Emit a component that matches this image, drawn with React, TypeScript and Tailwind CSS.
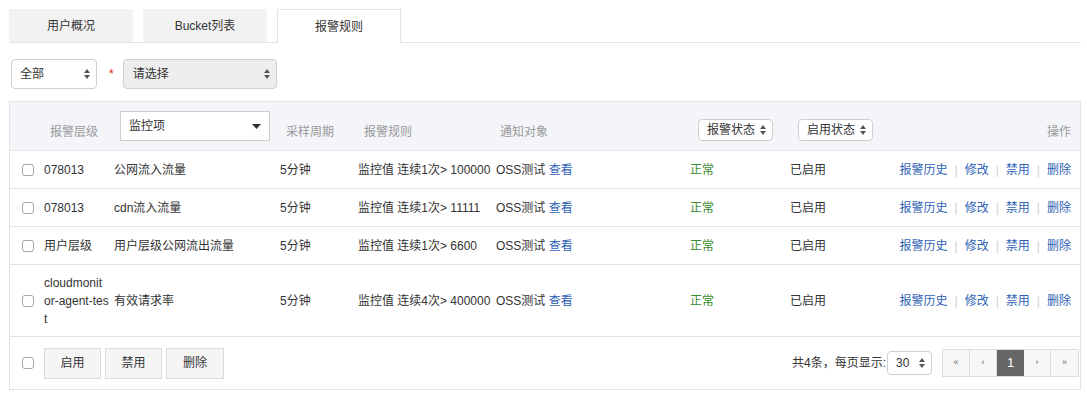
import React from "react";

const font = { fontFamily: '"Liberation Sans", "Noto Sans CJK SC", sans-serif' };

function UpDown({ className = "" }: { className?: string }) {
  return (
    <svg width="6" height="10" viewBox="0 0 6 10" className={className}>
      <path d="M3 0 L6 4 L0 4 Z" fill="#555" />
      <path d="M3 10 L6 6 L0 6 Z" fill="#555" />
    </svg>
  );
}

function Checkbox() {
  return <span className="block w-[12px] h-[12px] rounded-[3px] border border-[#a8a8a8] bg-white" />;
}

const cols = "grid grid-cols-[30px_70px_166px_78px_138px_194px_100px_94px_1fr]";

const rows = [
  { level: ["078013"], item: "公网流入流量", rule: "监控值 连续1次> 100000", tall: false },
  { level: ["078013"], item: "cdn流入流量", rule: "监控值 连续1次> 11111", tall: false },
  { level: ["用户层级"], item: "用户层级公网流出流量", rule: "监控值 连续1次> 6600", tall: false },
  { level: ["cloudmonit", "or-agent-tes", "t"], item: "有效请求率", rule: "监控值 连续4次> 400000", tall: true },
];

export default function App() {
  return (
    <div className="w-[1087px] h-[395px] bg-white text-[12px] text-[#333] overflow-hidden" style={font}>
      {/* Tabs */}
      <div className="pt-[9px] pl-[9px] pr-[6px]">
        <div className="flex border-b border-[#e3e3e3] h-[34px]">
          <div className="w-[124px] h-[33px] bg-[#f2f2f2] flex items-center justify-center">用户概况</div>
          <div className="w-[124px] h-[33px] bg-[#f2f2f2] ml-[10px] flex items-center justify-center">Bucket列表</div>
          <div className="w-[124px] h-[34px] bg-white ml-[10px] border border-b-0 border-[#e3e3e3] flex items-center justify-center -mb-px">报警规则</div>
        </div>
      </div>

      {/* Filters */}
      <div className="flex items-center pl-[11px] mt-[16px] h-[30px]">
        <div className="w-[86px] h-[30px] rounded-[4px] border border-[#cfcfcf] bg-white flex items-center justify-between pl-[8px] pr-[6px]">
          <span>全部</span>
          <UpDown />
        </div>
        <span className="text-[#e02020] ml-[12px] mr-[9px] text-[12px]">*</span>
        <div className="w-[154px] h-[30px] rounded-[4px] border border-[#cfcfcf] bg-[#eeeeee] flex items-center justify-between pl-[9px] pr-[6px]">
          <span>请选择</span>
          <UpDown />
        </div>
      </div>

      {/* Table */}
      <div className="ml-[9px] mt-[12px] w-[1072px] border border-[#e3e3e3]">
        {/* header */}
        <div className={`${cols} h-[49px] bg-[#f4f5f9] border-b border-[#e3e3e3] items-end pb-[9px] text-[#999]`}>
          <div />
          <div className="pl-[10px] leading-[18px]">报警层级</div>
          <div className="pl-[10px]">
            <div className="w-[150px] h-[30px] bg-white border border-[#cfcfcf] flex items-start justify-between pl-[8px] pr-[8px] pt-[5px] text-[#333]">
              <span>监控项</span>
              <svg width="9" height="5" viewBox="0 0 9 5" className="mt-[7px]"><path d="M0 0 L9 0 L4.5 5 Z" fill="#333" /></svg>
            </div>
          </div>
          <div className="pl-[10px] leading-[18px]">采样周期</div>
          <div className="pl-[10px] leading-[18px]">报警规则</div>
          <div className="pl-[8px] leading-[18px]">通知对象</div>
          <div className="pl-[12px]">
            <div className="w-[75px] h-[22px] bg-white border border-[#cfcfcf] rounded-[4px] flex items-center justify-between pl-[8px] pr-[6px] text-[#333]">
              <span>报警状态</span>
              <UpDown />
            </div>
          </div>
          <div className="pl-[12px]">
            <div className="w-[75px] h-[22px] bg-white border border-[#cfcfcf] rounded-[4px] flex items-center justify-between pl-[8px] pr-[6px] text-[#333]">
              <span>启用状态</span>
              <UpDown />
            </div>
          </div>
          <div className="text-right pr-[9px] leading-[18px]">操作</div>
        </div>

        {/* body */}
        {rows.map((r, i) => (
          <div
            key={i}
            className={`${cols} ${r.tall ? "h-[72px]" : "h-[38px]"} border-b border-[#e3e3e3] items-center leading-[18px]`}
          >
            <div className="pl-[12px]"><Checkbox /></div>
            <div className="pl-[4px]">
              {r.level.map((l, j) => (
                <div key={j}>{l}</div>
              ))}
            </div>
            <div className="pl-[4px]">{r.item}</div>
            <div className="pl-[4px]">5分钟</div>
            <div className="pl-[4px] whitespace-nowrap">{r.rule}</div>
            <div className="pl-[4px]">
              OSS测试 <span className="text-[#2f62b6]">查看</span>
            </div>
            <div className="pl-[4px] text-[#3b8a2f]">正常</div>
            <div className="pl-[4px]">已启用</div>
            <div className="flex justify-end pr-[9px] text-[#2f62b6]">
              <span>报警历史</span>
              <span className="text-[#d0d0d0] mx-[7px]">|</span>
              <span>修改</span>
              <span className="text-[#d0d0d0] mx-[7px]">|</span>
              <span>禁用</span>
              <span className="text-[#d0d0d0] mx-[7px]">|</span>
              <span>删除</span>
            </div>
          </div>
        ))}

        {/* footer */}
        <div className="h-[52px] flex items-center">
          <div className="pl-[12px] w-[34px]"><Checkbox /></div>
          <div className="flex gap-[4px]">
            <button className="w-[57px] h-[31px] bg-[#f5f5f5] border border-[#dcdcdc]">启用</button>
            <button className="w-[57px] h-[31px] bg-[#f5f5f5] border border-[#dcdcdc]">禁用</button>
            <button className="w-[58px] h-[31px] bg-[#f5f5f5] border border-[#dcdcdc]">删除</button>
          </div>
          <div className="flex-1" />
          <span>共4条，每页显示:</span>
          <div className="ml-[1px] w-[45px] h-[24px] rounded-[4px] border border-[#cfcfcf] bg-white flex items-center justify-between pl-[8px] pr-[6px]">
            <span>30</span>
            <UpDown />
          </div>
          <div className="ml-[10px] mr-[1px] flex h-[28px] border border-[#dcdcdc] bg-[#f7f7f7] text-[#666]">
            <div className="w-[27px] flex items-center justify-center border-r border-[#dcdcdc] text-[9px]">«</div>
            <div className="w-[27px] flex items-center justify-center border-r border-[#dcdcdc] text-[9px]">‹</div>
            <div className="w-[27px] flex items-center justify-center bg-[#666] text-white text-[13px]">1</div>
            <div className="w-[27px] flex items-center justify-center border-r border-[#dcdcdc] text-[9px]">›</div>
            <div className="w-[27px] flex items-center justify-center text-[9px]">»</div>
          </div>
        </div>
      </div>
    </div>
  );
}
